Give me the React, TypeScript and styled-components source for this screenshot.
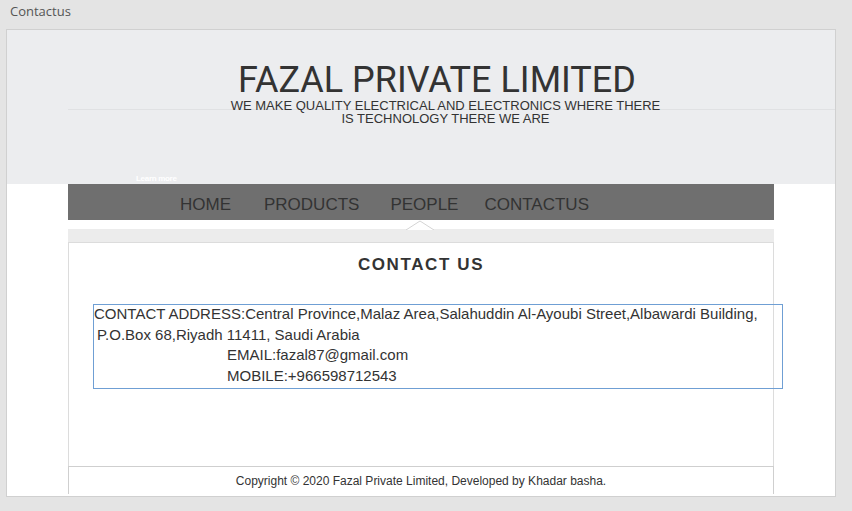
import styled, { createGlobalStyle } from "styled-components"

const GlobalStyle = createGlobalStyle`
  html, body {
    margin: 0;
    padding: 0;
    background: #e4e4e4;
    font-family: "Liberation Sans", Arial, sans-serif;
  }
`

// nav labels and the space before each one
const navItems = [
  { name: "HOME", space: 0 },
  { name: "PRODUCTS", space: 33 },
  { name: "PEOPLE", space: 31 },
  { name: "CONTACTUS", space: 26 },
]

const App = () => {
  return (
    <>
      <GlobalStyle />
      <Page>
        <WindowTitle>Contactus</WindowTitle>
        <Frame>
          <Header>
            <CompanyName>FAZAL PRIVATE LIMITED</CompanyName>
            <Tagline>
              WE MAKE QUALITY ELECTRICAL AND ELECTRONICS WHERE THERE
              <br />
              IS TECHNOLOGY THERE WE ARE
            </Tagline>
            <LearnMore>Learn more</LearnMore>
          </Header>

          <Main>
            <NavBar>
              {navItems.map((item) => (
                <NavLink key={item.name} space={item.space}>
                  {item.name}
                </NavLink>
              ))}
            </NavBar>
            <Spacer>
              <Notch viewBox="0 0 28 10" width="28" height="10">
                <polygon points="0,10 14,1 28,10" fill="#ffffff" />
                <polyline points="0,10 14,1 28,10" fill="none" stroke="#d4d4d4" strokeWidth="1" />
              </Notch>
            </Spacer>
            <Band />
            <Panel>
              <PanelTitle>CONTACT US</PanelTitle>
              <AddressBox>
                <AddressText>
                  <AddressLine indent={0}>
                    CONTACT ADDRESS:Central Province,Malaz Area,Salahuddin Al-Ayoubi Street,Albawardi Building,
                  </AddressLine>
                  <AddressLine indent={3}>P.O.Box 68,Riyadh 11411, Saudi Arabia</AddressLine>
                  <AddressLine indent={133}>EMAIL:fazal87@gmail.com</AddressLine>
                  <AddressLine indent={133}>MOBILE:+966598712543</AddressLine>
                </AddressText>
              </AddressBox>
            </Panel>
            <Footer>Copyright © 2020 Fazal Private Limited, Developed by Khadar basha.</Footer>
          </Main>
        </Frame>
      </Page>
    </>
  )
}

export default App

const Page = styled.div`
  width: 852px;
  height: 511px;
  overflow: hidden;
`

const WindowTitle = styled.div`
  height: 29px;
  padding-left: 10px;
  box-sizing: border-box;
  padding-top: 2px;
  font-family: "Open Sans", "Noto Sans", sans-serif;
  font-size: 13px;
  color: #555;
`

const Frame = styled.div`
  margin-left: 6px;
  width: 830px;
  height: 468px;
  box-sizing: border-box;
  border: 1px solid #d0d0d0;
  background: #ffffff;
`

const Header = styled.header`
  height: 154px;
  box-sizing: border-box;
  padding-top: 32px;
  display: flex;
  flex-direction: column;
  align-items: center;
  background:
    linear-gradient(#e0e1e3, #e0e1e3) no-repeat 61px 79px / calc(100% - 61px) 1px,
    #ecedef;
`

const CompanyName = styled.h1`
  margin: 0 0 0 32px;
  font-family: Roboto, "Liberation Sans", sans-serif;
  font-size: 36px;
  font-weight: normal;
  line-height: 37px;
  color: #333;
`

const Tagline = styled.p`
  margin: 0 0 0 49px;
  font-size: 13px;
  line-height: 13px;
  text-align: center;
  color: #333;
`

const LearnMore = styled.span`
  margin-top: auto;
  align-self: flex-start;
  margin-left: 129px;
  font-size: 8px;
  line-height: 10px;
  font-weight: bold;
  color: #ffffff;
  letter-spacing: -0.3px;
`

const Main = styled.main`
  width: 706px;
  margin-left: 61px;
  display: flex;
  flex-direction: column;
`

const NavBar = styled.nav`
  height: 36px;
  background: #6f6f6f;
  display: flex;
  align-items: center;
  padding-left: 112px;
`

const NavLink = styled.span<{ space: number }>`
  margin-left: ${(p) => p.space}px;
  font-size: 17px;
  color: #333;
  padding-top: 5px;
`

const Spacer = styled.div`
  height: 9px;
  position: relative;
`

const Notch = styled.svg`
  position: absolute;
  left: 338px;
  bottom: -1px;
  display: block;
`

const Band = styled.div`
  height: 13px;
  background: #ececec;
`

const Panel = styled.section`
  height: 224px;
  box-sizing: border-box;
  border: 1px solid #dcdcdc;
  border-bottom: none;
  padding-top: 12px;
  display: flex;
  flex-direction: column;
`

const PanelTitle = styled.h2`
  margin: 0;
  text-align: center;
  font-size: 17px;
  line-height: 19px;
  font-weight: bold;
  letter-spacing: 1.6px;
  color: #333;
`

const AddressBox = styled.div`
  margin-top: 30px;
  margin-left: 24px;
  width: 690px;
  height: 85px;
  box-sizing: border-box;
  border: 1px solid #6f9fd4;
`

const AddressText = styled.div`
  margin-top: -1px;
`

const AddressLine = styled.div<{ indent: number }>`
  padding-left: ${(p) => p.indent}px;
  font-size: 15px;
  line-height: 20.6px;
  color: #333;
  white-space: nowrap;
`

const Footer = styled.footer`
  height: 28px;
  box-sizing: border-box;
  border: 1px solid #cfcfcf;
  border-bottom: none;
  display: flex;
  align-items: center;
  justify-content: center;
  font-size: 12px;
  color: #333;
`
